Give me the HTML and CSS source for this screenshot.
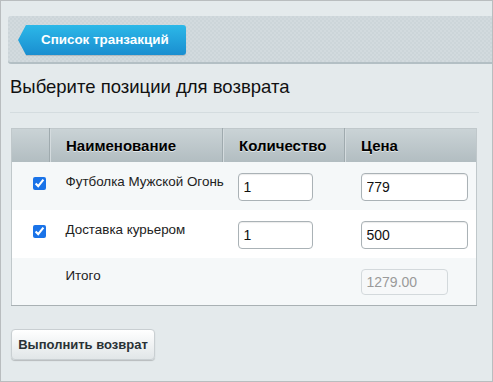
FILE: index.html
```html
<!DOCTYPE html>
<html lang="ru">

<head>
    <meta charset="UTF-8">
    <meta name="viewport" content="width=device-width, initial-scale=1.0">
    <title>Возврат</title>
    <link rel="stylesheet" href="styles.css">
</head>

<body>
    <div class="page">
        <div class="toolbar">
            <a class="back_btn" href="#">Список транзакций</a>
        </div>

        <div class="content">
            <h1 class="title">Выберите позиции для возврата</h1>
            <div class="sep"></div>

            <table class="items">
                <thead>
                    <tr>
                        <th class="col_check"></th>
                        <th class="col_name">Наименование</th>
                        <th class="col_qty">Количество</th>
                        <th class="col_price">Цена</th>
                    </tr>
                </thead>
                <tbody>
                    <tr class="odd">
                        <td class="cell_check"><input type="checkbox" checked></td>
                        <td class="cell_text">Футболка Мужской Огонь</td>
                        <td><input class="field qty" type="text" value="1"></td>
                        <td><input class="field price" type="text" value="779"></td>
                    </tr>
                    <tr>
                        <td class="cell_check"><input type="checkbox" checked></td>
                        <td class="cell_text">Доставка курьером</td>
                        <td><input class="field qty" type="text" value="1"></td>
                        <td><input class="field price" type="text" value="500"></td>
                    </tr>
                    <tr class="odd total">
                        <td></td>
                        <td class="cell_text">Итого</td>
                        <td></td>
                        <td><input class="field sum" type="text" value="1279.00" disabled></td>
                    </tr>
                </tbody>
            </table>

            <button class="submit_btn" type="button">Выполнить возврат</button>
        </div>
    </div>
</body>

</html>
```

FILE: styles.css
```css
* {
    box-sizing: border-box;
}

html,
body {
    margin: 0;
    padding: 0;
}

body {
    font-family: "Liberation Sans", Arial, sans-serif;
    font-size: 13px;
    color: #222;
}

.page {
    width: 493px;
    height: 382px;
    border: 1px solid #b9bdbf;
    background-color: #e4eaec;
    padding-top: 15px;
    overflow: hidden;
}

/* серая панель с кнопкой */
.toolbar {
    margin-left: 7px;
    height: 48px;
    padding: 9px 0 0 18px;
    background-color: #ccd5d9;
    background-image:
        linear-gradient(45deg, rgba(255, 255, 255, 0.12) 25%, transparent 25%, transparent 75%, rgba(255, 255, 255, 0.12) 75%),
        linear-gradient(45deg, rgba(255, 255, 255, 0.12) 25%, transparent 25%, transparent 75%, rgba(255, 255, 255, 0.12) 75%);
    background-size: 4px 4px;
    background-position: 0 0, 2px 2px;
    border-bottom: 2px solid #b3bfc4;
    border-radius: 3px 0 0 3px;
}

.back_btn {
    position: relative;
    display: inline-block;
    width: 160px;
    height: 30px;
    line-height: 30px;
    padding-left: 15px;
    color: #fff;
    font-weight: bold;
    font-size: 13.4px;
    text-decoration: none;
    background: linear-gradient(#2cb8e8, #1a8ed0);
    border-radius: 0 3px 3px 0;
    box-shadow: 0 1px 1px rgba(0, 0, 0, 0.15);
}

.back_btn::before {
    content: "";
    position: absolute;
    left: -8px;
    top: 0;
    width: 8px;
    height: 30px;
    background: linear-gradient(#2cb8e8, #1a8ed0);
    clip-path: polygon(100% 0, 0 50%, 100% 100%);
}

.content {
    padding: 0 14px 0 9px;
}

.title {
    margin: 0;
    padding-top: 12px;
    height: 48px;
    font-size: 18.5px;
    font-weight: normal;
    line-height: 22px;
    color: #111;
}

.sep {
    height: 1px;
    background-color: #d4dcdf;
    margin-right: -1px;
}

.items {
    width: 466px;
    margin: 15px 0 0 1px;
    border-collapse: collapse;
    table-layout: fixed;
    border: 1px solid #c0c8cb;
    border-bottom-color: #a9b1b4;
    background-color: #fff;
}

.items thead tr {
    height: 33px;
    background: linear-gradient(#cad3d6, #b2bdc1);
}

.items th {
    text-align: left;
    padding: 0 0 0 16px;
    font-size: 15px;
    font-weight: bold;
    color: #000;
    white-space: nowrap;
    text-shadow: 0 1px 0 rgba(255, 255, 255, 0.6);
    border-left: 1px solid #9faaae;
    box-shadow: inset 1px 0 0 #d4dbde;
}

.items th:first-child {
    border-left: 0;
    box-shadow: none;
}

.col_check {
    width: 38px;
}

.col_name {
    width: 173px;
}

.col_qty {
    width: 122px;
}

.items tbody tr {
    height: 48px;
}

.items tbody tr.odd {
    background-color: #f5f8f9;
}

.items td {
    vertical-align: top;
    padding: 11px 0 0 15px;
}

.items td.cell_text {
    padding: 12px 0 0 16px;
    line-height: 16px;
    font-size: 13.4px;
    white-space: nowrap;
}

.items td.cell_check {
    padding: 15px 0 0 21px;
}

.items tr.total td {
    padding-top: 11px;
}

.items tr.total td.cell_text {
    padding-top: 10px;
}

.cell_check input {
    margin: 0;
    width: 13px;
    height: 13px;
    accent-color: #1a73e8;
}

.field {
    height: 28px;
    padding: 0 5px;
    border: 1px solid #aab2b6;
    border-radius: 4px;
    background-color: #fff;
    font-family: "Liberation Sans", Arial, sans-serif;
    font-size: 14px;
    color: #111;
    box-shadow: inset 0 1px 1px rgba(0, 0, 0, 0.08);
}

.field.qty {
    width: 75px;
}

.field.price {
    width: 107px;
    margin-left: 1px;
}

.field.sum {
    width: 87px;
    height: 26px;
    margin-left: 1px;
    border-color: #d3d9dc;
    background-color: #f6f8f9;
    color: #9a9a9a;
    box-shadow: none;
}

.submit_btn {
    margin: 23px 0 0 1px;
    width: 144px;
    height: 31px;
    padding: 0;
    font-family: "Liberation Sans", Arial, sans-serif;
    font-size: 13px;
    font-weight: bold;
    color: #2a3136;
    background: linear-gradient(#ffffff, #e1e6e8);
    border: 1px solid #c9cfd2;
    border-radius: 4px;
    box-shadow: 0 1px 1px rgba(0, 0, 0, 0.2);
}
```
